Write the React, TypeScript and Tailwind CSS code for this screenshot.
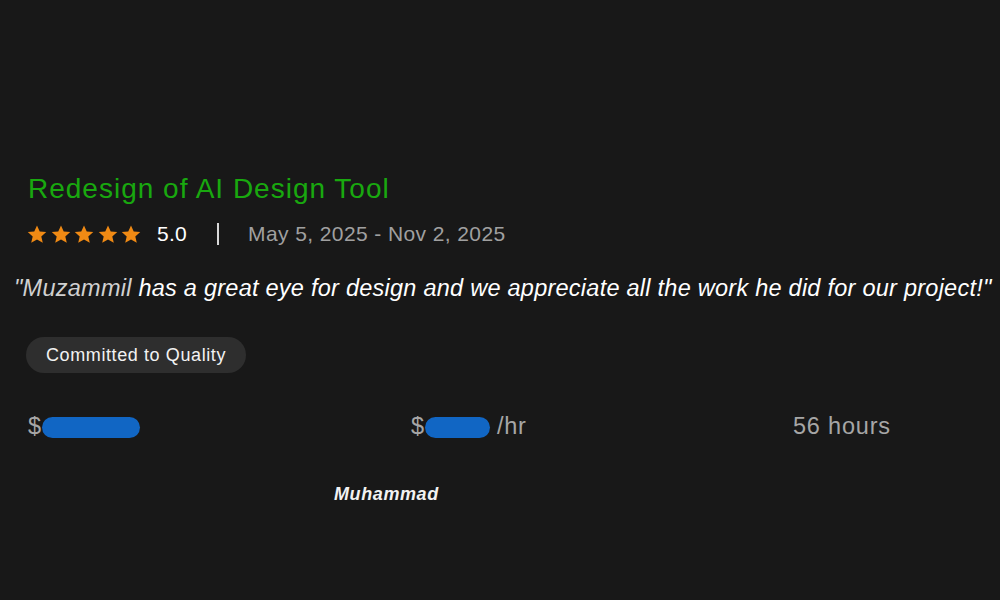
import React from "react";

function Star() {
  return (
    <svg width="20" height="19" viewBox="0 0 24 23" fill="#f08a14">
      <path d="M12 0.6l3.3 7.2 7.9.8-6 5.2 1.8 7.8L12 17.5l-7 4.1 1.8-7.8-6-5.2 7.9-.8z" />
    </svg>
  );
}

export default function App() {
  return (
    <div
      className="w-[1000px] h-[600px] bg-[#181818] overflow-hidden text-white"
      style={{ fontFamily: '"Liberation Sans", Arial, sans-serif' }}
    >
      <div className="pt-[173px] pl-[28px] flex flex-col">
        <h1 className="text-[28px] leading-[32px] h-[32px] text-[#19a80f] tracking-[1px] whitespace-nowrap">
          Redesign of AI Design Tool
        </h1>
        <div className="flex items-center mt-[17px] h-[24px]">
          <div className="flex gap-[3.5px] -ml-[1px]">
            <Star />
            <Star />
            <Star />
            <Star />
            <Star />
          </div>
          <span className="ml-[16px] text-[21px] leading-[24px] text-white tracking-[0.3px]">5.0</span>
          <span className="ml-[30px] w-[2px] h-[22px] bg-[#d8d8d8]" />
          <span className="ml-[29px] text-[21px] leading-[24px] text-[#a0a0a0] tracking-[0.4px] whitespace-nowrap">
            May 5, 2025 - Nov 2, 2025
          </span>
        </div>
        <p className="-ml-[14px] mt-[28px] text-[23.5px] leading-[28px] h-[28px] italic text-white tracking-[0.25px] whitespace-nowrap">
          <span className="text-[#d0d0d0]">"Muzammil</span> has a great eye for design and we
          appreciate all the work he did for our project!"
        </p>
        <div className="mt-[35px] -ml-[2px] self-start h-[36px] px-[20px] flex items-center rounded-full bg-[#2e2e2e] text-[18px] text-[#f2f2f2] tracking-[0.6px] whitespace-nowrap">
          Committed to Quality
        </div>
        <div className="mt-[41px] flex items-center text-[23.5px] text-[#a6a6a6] h-[26px] tracking-[0.8px]">
          <div className="w-[383px] flex items-center">
            <span>$</span>
            <span className="inline-block w-[98px] h-[21px] rounded-full bg-[#1166c4]" />
          </div>
          <div className="w-[382px] flex items-center">
            <span>$</span>
            <span className="inline-block w-[65px] h-[21px] rounded-full bg-[#1166c4]" />
            <span className="ml-[7px]">/hr</span>
          </div>
          <span className="whitespace-nowrap">56 hours</span>
        </div>
        <div className="mt-[43px] ml-[306px] text-[18px] leading-[22px] italic font-bold text-[#f2f2f2] tracking-[0.6px]">
          Muhammad
        </div>
      </div>
    </div>
  );
}
